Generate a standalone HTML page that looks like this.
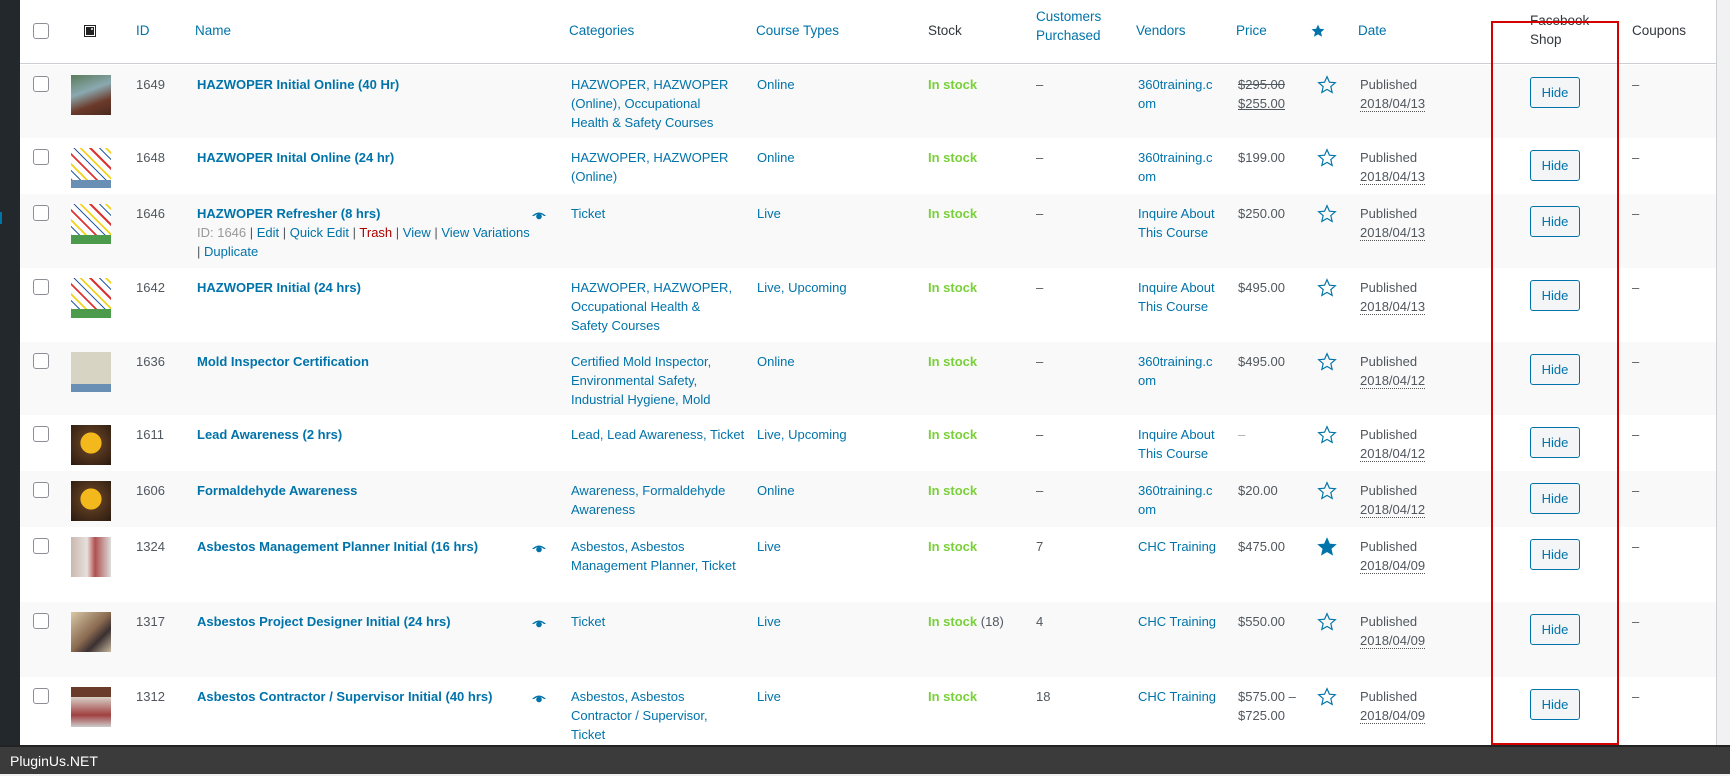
<!DOCTYPE html>
<html><head><meta charset="utf-8"><style>
*{margin:0;padding:0;box-sizing:border-box}
body{width:1730px;height:774px;overflow:hidden;background:#f1f1f1;font-family:"Liberation Sans",sans-serif;font-size:13px;color:#50575e;position:relative}
.strip{position:absolute;left:0;top:0;width:20px;height:745px;background:#23282d}
.table{position:absolute;left:20px;top:0;width:1697px;height:745px;background:#fff;border-right:1px solid #ccd0d4}
.hdr{position:absolute;left:0;top:0;width:100%;height:64px;border-bottom:1px solid #ccd0d4;background:#fff}
.h{position:absolute;color:#0073aa;line-height:19px;font-size:13.5px}
.row{position:absolute;left:0;width:100%}
.g{background:#f9f9f9}
.c{position:absolute;line-height:19px;top:10px}
.a{color:#0073aa}
.nm{color:#0073aa;font-weight:bold;font-size:13px}
.cb{position:absolute;width:16px;height:16px;border:1px solid #8c8f94;border-radius:3px;background:#fff;top:11px;left:13px}
.th{position:absolute;left:51px;top:10px;width:40px;height:40px}
.st{color:#7ad03a;font-weight:bold}
.dt{border-bottom:1px dotted #555}
.btn{position:absolute;left:1510px;top:12px;width:50px;height:31px;border:1px solid #0073aa;border-radius:3px;background:#f3f5f6;color:#0073aa;font-size:13px;text-align:center;line-height:29px}
.eye{position:absolute;left:512px;top:17px;width:14px;height:9px}
.star{position:absolute;left:1297px;top:10px}
.hz{background:
linear-gradient(#6a8fb5,#6a8fb5) 0 100%/100% 8px no-repeat,
repeating-linear-gradient(45deg,#fff 0 5px,#d33 5px 7px,#fff 7px 12px,#2a5caa 12px 13px,#fff 13px 16px,#f2d31b 16px 18px)}
.hzg{background:
linear-gradient(#4c9a4c,#4c9a4c) 0 100%/100% 9px no-repeat,
repeating-linear-gradient(45deg,#fff 0 5px,#d33 5px 7px,#fff 7px 12px,#2a5caa 12px 13px,#fff 13px 16px,#f2d31b 16px 18px)}
.foot{position:absolute;left:0;top:745px;width:1730px;height:29px;background:#3b3b3b;color:#fff;font-size:14px;line-height:29px;padding-left:10px;border-top:2px solid #222}
.red{position:absolute;left:1491px;top:21px;width:128px;height:724px;border:2px solid #d40000}
</style></head><body>
<div class="strip"><div style="position:absolute;left:0;top:212px;width:2px;height:12px;background:#0073aa"></div></div>
<div class="table">
<div class="hdr">
<div class="cb" style="top:23px"></div>
<svg style="position:absolute;left:64px;top:25px" width="12" height="12"><rect x="0.5" y="0.5" width="11" height="11" fill="#fff" stroke="#222"/><rect x="2" y="2" width="8" height="8" fill="#222"/><circle cx="8" cy="4" r="1" fill="#fff"/></svg>
<div class="h" style="left:116px;top:21px">ID</div>
<div class="h" style="left:175px;top:21px">Name</div>
<div class="h" style="left:549px;top:21px">Categories</div>
<div class="h" style="left:736px;top:21px">Course Types</div>
<div class="h" style="left:908px;top:21px;color:#32373c">Stock</div>
<div class="h" style="left:1016px;top:7px">Customers<br>Purchased</div>
<div class="h" style="left:1116px;top:21px">Vendors</div>
<div class="h" style="left:1216px;top:21px">Price</div>
<svg style="position:absolute;left:1291px;top:24px" width="14" height="14" viewBox="0 0 24 24"><path d="M12 1l3.2 7.2 7.8.7-5.9 5.2 1.8 7.7L12 17.8 5.1 21.8l1.8-7.7L1 8.9l7.8-.7z" fill="#0073aa"/></svg>
<div class="h" style="left:1338px;top:21px">Date</div>
<div class="h" style="left:1510px;top:11px;color:#32373c">Facebook<br>Shop</div>
<div class="h" style="left:1612px;top:21px;color:#32373c">Coupons</div>
</div>

<div class="row g" style="top:65px;height:73px">
<div class="cb"></div><div class="th" style="background:linear-gradient(160deg,#5b7a5a,#8aa9b0 40%,#6b3a2a 70%,#4a2a20)"></div>
<div class="c" style="left:116px">1649</div><div class="c nm" style="left:177px">HAZWOPER Initial Online (40 Hr)</div>
<div class="c a" style="left:551px">HAZWOPER, HAZWOPER<br>(Online), Occupational<br>Health &amp; Safety Courses</div>
<div class="c a" style="left:737px">Online</div><div class="c st" style="left:908px">In stock</div><div class="c" style="left:1016px">–</div>
<div class="c a" style="left:1118px">360training.c<br>om</div>
<div class="c" style="left:1218px"><s>$295.00</s><br><u>$255.00</u></div>
<svg class="star" width="20" height="20" viewBox="0 0 24 24"><path d="M12 2l2.9 6.6 7.1.6-5.4 4.7 1.6 7L12 17.3 5.8 20.9l1.6-7L2 9.2l7.1-.6z" fill="none" stroke="#0073aa" stroke-width="1.4"/></svg>
<div class="c" style="left:1340px">Published<br><span class="dt">2018/04/13</span></div>
<div class="btn">Hide</div><div class="c" style="left:1612px">–</div></div>

<div class="row" style="top:138px;height:56px">
<div class="cb"></div><div class="th hz"></div>
<div class="c" style="left:116px">1648</div><div class="c nm" style="left:177px">HAZWOPER Inital Online (24 hr)</div>
<div class="c a" style="left:551px">HAZWOPER, HAZWOPER<br>(Online)</div>
<div class="c a" style="left:737px">Online</div><div class="c st" style="left:908px">In stock</div><div class="c" style="left:1016px">–</div>
<div class="c a" style="left:1118px">360training.c<br>om</div><div class="c" style="left:1218px">$199.00</div>
<svg class="star" width="20" height="20" viewBox="0 0 24 24"><path d="M12 2l2.9 6.6 7.1.6-5.4 4.7 1.6 7L12 17.3 5.8 20.9l1.6-7L2 9.2l7.1-.6z" fill="none" stroke="#0073aa" stroke-width="1.4"/></svg>
<div class="c" style="left:1340px">Published<br><span class="dt">2018/04/13</span></div>
<div class="btn">Hide</div><div class="c" style="left:1612px">–</div></div>

<div class="row g" style="top:194px;height:74px">
<div class="cb"></div><div class="th hzg"></div>
<div class="c" style="left:116px">1646</div><div class="c" style="left:177px"><span class="nm">HAZWOPER Refresher (8 hrs)</span><br><span style="color:#999">ID: 1646</span> | <span class="a">Edit</span> | <span class="a">Quick Edit</span> | <span style="color:#a00">Trash</span> | <span class="a">View</span> | <span class="a">View Variations</span><br>| <span class="a">Duplicate</span></div>
<svg class="eye" viewBox="0 0 14 9"><path d="M0 5Q7-2 14 5L12 5Q7 1 2 5z" fill="#0073aa"/><circle cx="7" cy="5.5" r="2.8" fill="#0073aa"/></svg>
<div class="c a" style="left:551px">Ticket</div>
<div class="c a" style="left:737px">Live</div><div class="c st" style="left:908px">In stock</div><div class="c" style="left:1016px">–</div>
<div class="c a" style="left:1118px">Inquire About<br>This Course</div><div class="c" style="left:1218px">$250.00</div>
<svg class="star" width="20" height="20" viewBox="0 0 24 24"><path d="M12 2l2.9 6.6 7.1.6-5.4 4.7 1.6 7L12 17.3 5.8 20.9l1.6-7L2 9.2l7.1-.6z" fill="none" stroke="#0073aa" stroke-width="1.4"/></svg>
<div class="c" style="left:1340px">Published<br><span class="dt">2018/04/13</span></div>
<div class="btn">Hide</div><div class="c" style="left:1612px">–</div></div>

<div class="row" style="top:268px;height:74px">
<div class="cb"></div><div class="th hzg"></div>
<div class="c" style="left:116px">1642</div><div class="c nm" style="left:177px">HAZWOPER Initial (24 hrs)</div>
<div class="c a" style="left:551px">HAZWOPER, HAZWOPER,<br>Occupational Health &amp;<br>Safety Courses</div>
<div class="c a" style="left:737px">Live, Upcoming</div><div class="c st" style="left:908px">In stock</div><div class="c" style="left:1016px">–</div>
<div class="c a" style="left:1118px">Inquire About<br>This Course</div><div class="c" style="left:1218px">$495.00</div>
<svg class="star" width="20" height="20" viewBox="0 0 24 24"><path d="M12 2l2.9 6.6 7.1.6-5.4 4.7 1.6 7L12 17.3 5.8 20.9l1.6-7L2 9.2l7.1-.6z" fill="none" stroke="#0073aa" stroke-width="1.4"/></svg>
<div class="c" style="left:1340px">Published<br><span class="dt">2018/04/13</span></div>
<div class="btn">Hide</div><div class="c" style="left:1612px">–</div></div>

<div class="row g" style="top:342px;height:73px">
<div class="cb"></div><div class="th" style="background:linear-gradient(#d8d4c4 0 80%,#6a8fb5 80%)"></div>
<div class="c" style="left:116px">1636</div><div class="c nm" style="left:177px">Mold Inspector Certification</div>
<div class="c a" style="left:551px">Certified Mold Inspector,<br>Environmental Safety,<br>Industrial Hygiene, Mold</div>
<div class="c a" style="left:737px">Online</div><div class="c st" style="left:908px">In stock</div><div class="c" style="left:1016px">–</div>
<div class="c a" style="left:1118px">360training.c<br>om</div><div class="c" style="left:1218px">$495.00</div>
<svg class="star" width="20" height="20" viewBox="0 0 24 24"><path d="M12 2l2.9 6.6 7.1.6-5.4 4.7 1.6 7L12 17.3 5.8 20.9l1.6-7L2 9.2l7.1-.6z" fill="none" stroke="#0073aa" stroke-width="1.4"/></svg>
<div class="c" style="left:1340px">Published<br><span class="dt">2018/04/12</span></div>
<div class="btn">Hide</div><div class="c" style="left:1612px">–</div></div>

<div class="row" style="top:415px;height:56px">
<div class="cb"></div><div class="th" style="background:radial-gradient(circle at 50% 45%,#f2b81c 0 35%,#5a3a20 36%,#2a1a10)"></div>
<div class="c" style="left:116px">1611</div><div class="c nm" style="left:177px">Lead Awareness (2 hrs)</div>
<div class="c a" style="left:551px">Lead, Lead Awareness, Ticket</div>
<div class="c a" style="left:737px">Live, Upcoming</div><div class="c st" style="left:908px">In stock</div><div class="c" style="left:1016px">–</div>
<div class="c a" style="left:1118px">Inquire About<br>This Course</div><div class="c" style="left:1218px;color:#aaa">–</div>
<svg class="star" width="20" height="20" viewBox="0 0 24 24"><path d="M12 2l2.9 6.6 7.1.6-5.4 4.7 1.6 7L12 17.3 5.8 20.9l1.6-7L2 9.2l7.1-.6z" fill="none" stroke="#0073aa" stroke-width="1.4"/></svg>
<div class="c" style="left:1340px">Published<br><span class="dt">2018/04/12</span></div>
<div class="btn">Hide</div><div class="c" style="left:1612px">–</div></div>

<div class="row g" style="top:471px;height:56px">
<div class="cb"></div><div class="th" style="background:radial-gradient(circle at 50% 45%,#f2b81c 0 35%,#5a3a20 36%,#2a1a10)"></div>
<div class="c" style="left:116px">1606</div><div class="c nm" style="left:177px">Formaldehyde Awareness</div>
<div class="c a" style="left:551px">Awareness, Formaldehyde<br>Awareness</div>
<div class="c a" style="left:737px">Online</div><div class="c st" style="left:908px">In stock</div><div class="c" style="left:1016px">–</div>
<div class="c a" style="left:1118px">360training.c<br>om</div><div class="c" style="left:1218px">$20.00</div>
<svg class="star" width="20" height="20" viewBox="0 0 24 24"><path d="M12 2l2.9 6.6 7.1.6-5.4 4.7 1.6 7L12 17.3 5.8 20.9l1.6-7L2 9.2l7.1-.6z" fill="none" stroke="#0073aa" stroke-width="1.4"/></svg>
<div class="c" style="left:1340px">Published<br><span class="dt">2018/04/12</span></div>
<div class="btn">Hide</div><div class="c" style="left:1612px">–</div></div>

<div class="row" style="top:527px;height:75px">
<div class="cb"></div><div class="th" style="background:linear-gradient(90deg,#c9b8b0,#e8e0dc 40%,#b05050 60%,#ddd)"></div>
<div class="c" style="left:116px">1324</div><div class="c nm" style="left:177px">Asbestos Management Planner Initial (16 hrs)</div>
<svg class="eye" viewBox="0 0 14 9"><path d="M0 5Q7-2 14 5L12 5Q7 1 2 5z" fill="#0073aa"/><circle cx="7" cy="5.5" r="2.8" fill="#0073aa"/></svg>
<div class="c a" style="left:551px">Asbestos, Asbestos<br>Management Planner, Ticket</div>
<div class="c a" style="left:737px">Live</div><div class="c st" style="left:908px">In stock</div><div class="c" style="left:1016px">7</div>
<div class="c a" style="left:1118px">CHC Training</div><div class="c" style="left:1218px">$475.00</div>
<svg class="star" width="20" height="20" viewBox="0 0 24 24"><path d="M12 2l2.9 6.6 7.1.6-5.4 4.7 1.6 7L12 17.3 5.8 20.9l1.6-7L2 9.2l7.1-.6z" fill="#0073aa" stroke="#0073aa" stroke-width="1.4"/></svg>
<div class="c" style="left:1340px">Published<br><span class="dt">2018/04/09</span></div>
<div class="btn">Hide</div><div class="c" style="left:1612px">–</div></div>

<div class="row g" style="top:602px;height:75px">
<div class="cb"></div><div class="th" style="background:linear-gradient(135deg,#d8c8a8,#8a6a50 50%,#3a3030 70%,#c8b8a0)"></div>
<div class="c" style="left:116px">1317</div><div class="c nm" style="left:177px">Asbestos Project Designer Initial (24 hrs)</div>
<svg class="eye" viewBox="0 0 14 9"><path d="M0 5Q7-2 14 5L12 5Q7 1 2 5z" fill="#0073aa"/><circle cx="7" cy="5.5" r="2.8" fill="#0073aa"/></svg>
<div class="c a" style="left:551px">Ticket</div>
<div class="c a" style="left:737px">Live</div><div class="c" style="left:908px"><span class="st">In stock</span> (18)</div><div class="c" style="left:1016px">4</div>
<div class="c a" style="left:1118px">CHC Training</div><div class="c" style="left:1218px">$550.00</div>
<svg class="star" width="20" height="20" viewBox="0 0 24 24"><path d="M12 2l2.9 6.6 7.1.6-5.4 4.7 1.6 7L12 17.3 5.8 20.9l1.6-7L2 9.2l7.1-.6z" fill="none" stroke="#0073aa" stroke-width="1.4"/></svg>
<div class="c" style="left:1340px">Published<br><span class="dt">2018/04/09</span></div>
<div class="btn">Hide</div><div class="c" style="left:1612px">–</div></div>

<div class="row" style="top:677px;height:68px">
<div class="cb"></div><div class="th" style="background:linear-gradient(#6a3a2a 0 25%,#d8d0c8 25%,#a04040 70%,#ccc)"></div>
<div class="c" style="left:116px">1312</div><div class="c nm" style="left:177px">Asbestos Contractor / Supervisor Initial (40 hrs)</div>
<svg class="eye" viewBox="0 0 14 9"><path d="M0 5Q7-2 14 5L12 5Q7 1 2 5z" fill="#0073aa"/><circle cx="7" cy="5.5" r="2.8" fill="#0073aa"/></svg>
<div class="c a" style="left:551px">Asbestos, Asbestos<br>Contractor / Supervisor,<br>Ticket</div>
<div class="c a" style="left:737px">Live</div><div class="c st" style="left:908px">In stock</div><div class="c" style="left:1016px">18</div>
<div class="c a" style="left:1118px">CHC Training</div><div class="c" style="left:1218px">$575.00 –<br>$725.00</div>
<svg class="star" width="20" height="20" viewBox="0 0 24 24"><path d="M12 2l2.9 6.6 7.1.6-5.4 4.7 1.6 7L12 17.3 5.8 20.9l1.6-7L2 9.2l7.1-.6z" fill="none" stroke="#0073aa" stroke-width="1.4"/></svg>
<div class="c" style="left:1340px">Published<br><span class="dt">2018/04/09</span></div>
<div class="btn">Hide</div><div class="c" style="left:1612px">–</div></div>
</div>
<div class="red"></div>
<div class="foot">PluginUs.NET</div>
</body></html>
